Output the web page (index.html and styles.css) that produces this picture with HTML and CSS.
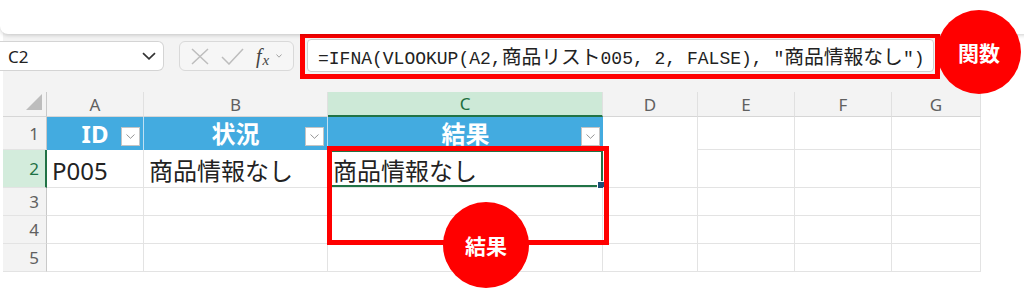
FILE: index.html
```html
<!DOCTYPE html>
<html lang="ja">
<head>
<meta charset="utf-8">
<title>IFNA VLOOKUP</title>
<link rel="stylesheet" href="styles.css">
</head>
<body>
<div class="window">
  <div class="ribbon"></div>
  <div class="formula-row">
    <div class="namebox">
      <span class="name">C2</span>
      <svg class="nb-chev" width="14" height="8" viewBox="0 0 14 8"><path d="M1 1.2 L7 6.8 L13 1.2" fill="none" stroke="#333" stroke-width="1.7"/></svg>
    </div>
    <div class="fxbox">
      <svg class="ic" width="18" height="17" viewBox="0 0 18 17"><path d="M1 1 L17 16 M17 1 L1 16" fill="none" stroke="#bdbdbd" stroke-width="1.5"/></svg>
      <svg class="ic" width="23" height="17" viewBox="0 0 23 17"><path d="M1 9 L8 16 L22 1" fill="none" stroke="#bdbdbd" stroke-width="1.5"/></svg>
      <span class="fx"><i>f</i><i class="x">x</i></span>
      <svg class="fx-chev" width="6" height="4" viewBox="0 0 6 4"><path d="M0.5 0.5 L3 3.2 L5.5 0.5" fill="none" stroke="#9a9a9a" stroke-width="0.9"/></svg>
    </div>
    <div class="formula">
      <span class="ftext">=IFNA(VLOOKUP(A2,<span class="jp">商品リスト</span>005, 2, FALSE), "<span class="jp">商品情報なし</span>")</span>
      <div class="frame frame-formula"></div>
    </div>
  </div>
  <div class="sheet">
    <div class="corner"><svg width="16" height="16" viewBox="0 0 16 16"><path d="M16 0 L16 16 L0 16 Z" fill="#bdbdbd"/></svg></div>
    <div class="ch">A</div>
    <div class="ch">B</div>
    <div class="ch sel">C</div>
    <div class="ch">D</div>
    <div class="ch">E</div>
    <div class="ch">F</div>
    <div class="ch">G</div>

    <div class="rh">1</div>
    <div class="c th">ID<span class="fbtn"><svg width="9" height="5" viewBox="0 0 9 5"><path d="M0.5 0.5 L4.5 4.3 L8.5 0.5" fill="none" stroke="#8a8a8a" stroke-width="0.9"/></svg></span></div>
    <div class="c th">状況<span class="fbtn"><svg width="9" height="5" viewBox="0 0 9 5"><path d="M0.5 0.5 L4.5 4.3 L8.5 0.5" fill="none" stroke="#8a8a8a" stroke-width="0.9"/></svg></span></div>
    <div class="c th last">結果<span class="fbtn"><svg width="9" height="5" viewBox="0 0 9 5"><path d="M0.5 0.5 L4.5 4.3 L8.5 0.5" fill="none" stroke="#8a8a8a" stroke-width="0.9"/></svg></span></div>
    <div class="c nob"></div>
    <div class="c"></div>
    <div class="c"></div>
    <div class="c"></div>

    <div class="rh sel">2</div>
    <div class="c data">P005</div>
    <div class="c data">商品情報なし</div>
    <div class="c data active">商品情報なし</div>
    <div class="c"></div>
    <div class="c"></div>
    <div class="c"></div>
    <div class="c"></div>

    <div class="rh">3</div>
    <div class="c"></div><div class="c"></div><div class="c"></div><div class="c"></div><div class="c"></div><div class="c"></div><div class="c"></div>

    <div class="rh">4</div>
    <div class="c"></div><div class="c"></div><div class="c"></div><div class="c"></div><div class="c"></div><div class="c"></div><div class="c"></div>

    <div class="rh">5</div>
    <div class="c"></div><div class="c"></div><div class="c"></div><div class="c"></div><div class="c"></div><div class="c"></div><div class="c"></div>

    <div class="frame frame-result"></div>
    <div class="badge badge-result">結果</div>
  </div>
  <div class="badge badge-func">関数</div>
</div>
</body>
</html>
```

FILE: styles.css
```css
* { box-sizing: border-box; }

html, body {
  margin: 0;
  padding: 0;
  background: #ffffff;
}

body {
  width: 1024px;
  height: 297px;
  overflow: hidden;
  font-family: "Noto Sans", "Noto Sans CJK JP", sans-serif;
  color: #222;
}

.window {
  position: relative;
  width: 978px;
  margin-left: 3px;
  background: #f3f3f3;
}

.ribbon {
  position: relative;
  z-index: 1;
  width: 1030px;
  height: 34px;
  margin-left: -3px;
  background: #ffffff;
  border-radius: 0 0 0 8px;
  box-shadow: 0 1px 4px rgba(0, 0, 0, 0.2);
}

.formula-row {
  display: flex;
  align-items: flex-start;
  height: 58px;
  padding-top: 7px;
}

.namebox {
  display: flex;
  align-items: center;
  justify-content: space-between;
  width: 164px;
  height: 30px;
  margin-left: -3px;
  padding: 0 5px 0 8px;
  background: #ffffff;
  border: 1px solid #d4d4d4;
  border-left: none;
  border-radius: 0 6px 6px 0;
}

.name {
  font-family: "Noto Sans", sans-serif;
  font-size: 17px;
  line-height: 1;
  color: #222;
}

.nb-chev { margin-right: 2px; }

.fxbox {
  display: flex;
  align-items: center;
  width: 115px;
  height: 30px;
  margin-left: 15px;
  padding-left: 11px;
  border: 1px solid #d9d9d9;
  border-radius: 6px;
  background: #f6f6f6;
}

.fxbox .ic { margin-right: 12px; }

.fx {
  font-family: "Liberation Serif", serif;
  font-size: 20px;
  line-height: 1;
  color: #444;
}

.fx .x {
  font-size: 15px;
  position: relative;
  top: 2px;
  margin-left: 1px;
}

.fx-chev { margin-left: 7px; }

.formula {
  position: relative;
  display: flex;
  align-items: center;
  width: 627px;
  height: 33px;
  margin-left: 13px;
  margin-top: -2px;
  padding-left: 10px;
  background: #ffffff;
  border: 1px solid #cfcfcf;
  border-radius: 4px;
  white-space: nowrap;
}

.ftext {
  font-family: "Liberation Mono", "Noto Sans CJK JP", monospace;
  font-size: 18px;
  color: #222;
}

.ftext .jp {
  font-family: "Noto Sans CJK JP", sans-serif;
  font-size: 19.8px;
}

.frame {
  position: absolute;
  border: 5px solid #ff0000;
  pointer-events: none;
}

.frame-formula {
  left: -8px;
  top: -7px;
  right: -7px;
  bottom: -8px;
}

.sheet {
  position: relative;
  display: grid;
  grid-template-columns: 44px 97px 184px 275px 95px 97px 97px 89px;
  grid-template-rows: 25px 33px 38px 28px 28px 28px;
  background: #ffffff;
}

.corner {
  display: flex;
  align-items: flex-end;
  justify-content: flex-end;
  padding: 0 4px 6px 0;
  background: #f3f3f3;
  border-right: 1px solid #c9c9c9;
  border-bottom: 1px solid #d6d6d6;
}

.ch {
  display: flex;
  align-items: center;
  justify-content: center;
  background: #f3f3f3;
  border-right: 1px solid #e0e0e0;
  border-bottom: 1px solid #d6d6d6;
  font-size: 17px;
  color: #606060;
  line-height: 1;
}

.ch.sel {
  background: #cde9d7;
  color: #1e6e3f;
  border-bottom: 2px solid #217346;
}

.rh {
  display: flex;
  align-items: center;
  justify-content: flex-end;
  padding-right: 7px;
  background: #f3f3f3;
  border-right: 1px solid #c9c9c9;
  border-bottom: 1px solid #e3e3e3;
  font-size: 17px;
  color: #606060;
  line-height: 1;
}

.rh.sel {
  background: #d3ecdc;
  color: #1e7145;
  border-right: 2px solid #217346;
  padding-right: 6px;
}

.c {
  position: relative;
  border-right: 1px solid #e3e3e3;
  border-bottom: 1px solid #e3e3e3;
}

.c.nob { border-bottom: none; }

.th {
  display: flex;
  align-items: center;
  justify-content: center;
  background: #43abe0;
  border-right: 1px solid #bfe0f3;
  border-bottom: none;
  color: #ffffff;
  font-weight: 700;
  font-size: 24px;
  line-height: 1;
}

.th.last { border-right: none; }

.fbtn {
  position: absolute;
  right: 3px;
  bottom: 4px;
  width: 19px;
  height: 19px;
  display: flex;
  align-items: center;
  justify-content: center;
  background: #ffffff;
  border: 1px solid #c4c4c4;
}

.data {
  display: flex;
  align-items: center;
  padding-left: 5px;
  padding-top: 5px;
  font-size: 24px;
  line-height: 1;
  color: #222;
  white-space: nowrap;
}

.data.active {
  box-shadow: inset 0 0 0 2px #217346;
  border-right: none;
}

.data.active::after {
  content: "";
  position: absolute;
  right: -2px;
  bottom: -2px;
  width: 6px;
  height: 6px;
  background: #1d4f76;
  border: 1px solid #ffffff;
}

.frame-result {
  left: 324px;
  top: 54px;
  width: 282px;
  height: 99px;
}

.badge {
  position: absolute;
  display: flex;
  align-items: center;
  justify-content: center;
  border-radius: 50%;
  background: #ff0000;
  color: #ffffff;
  font-family: "Noto Sans CJK JP", sans-serif;
  font-weight: 700;
  font-size: 21px;
  line-height: 1;
}

.badge-result {
  left: 440px;
  top: 110px;
  width: 86px;
  height: 86px;
}

.badge-func {
  left: 934px;
  top: 10px;
  width: 84px;
  height: 84px;
  z-index: 2;
}
```
